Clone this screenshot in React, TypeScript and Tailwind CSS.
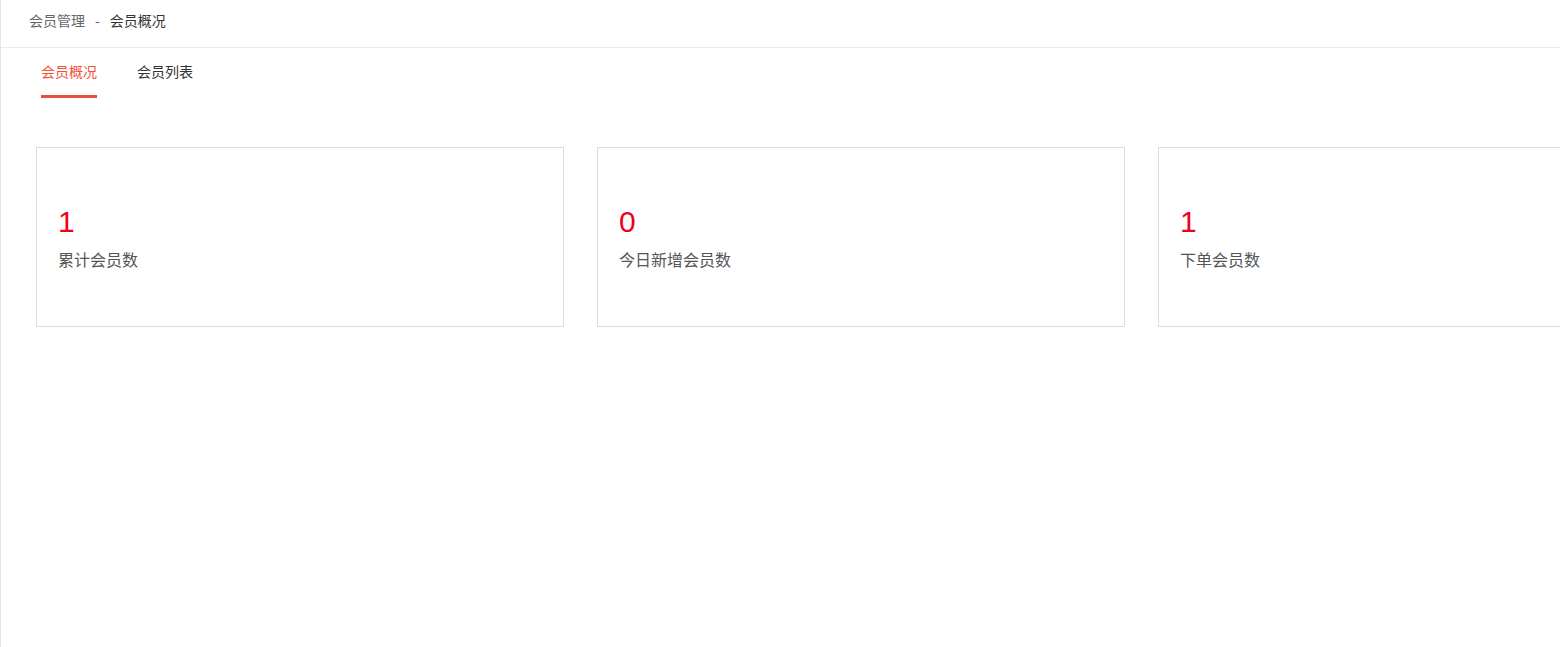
const stats = [
  { value: 1, label: '累计会员数' },
  { value: 0, label: '今日新增会员数' },
  { value: 1, label: '下单会员数' },
];

const tabs = ['会员概况', '会员列表'];

export default function App() {
  const active = 0;
  return (
    <div
      className="h-[647px] w-full overflow-hidden border-l border-[#e5e5e5] bg-white"
      style={{ fontFamily: '"Noto Sans CJK SC", "Noto Sans", sans-serif' }}
    >
      {/* Breadcrumb */}
      <div className="flex h-[48px] items-start border-b border-[#ebebeb] pl-[28px] pt-[10px] text-[14px] leading-[20px]">
        <span className="text-[#666]">会员管理</span>
        <span className="mx-[10px] text-[#666]">-</span>
        <span className="text-[#333]">会员概况</span>
      </div>

      {/* Tabs */}
      <div className="flex gap-[40px] pl-[40px]">
        {tabs.map((t, i) => (
          <div key={t} className="flex flex-col pt-[13px]">
            <span
              className={
                'text-[14px] leading-[20px] ' +
                (i === active ? 'text-[#f2503a]' : 'text-[#333]')
              }
            >
              {t}
            </span>
            <div
              className={
                'mt-[14px] h-[3px] ' + (i === active ? 'bg-[#ea4f3b]' : 'bg-transparent')
              }
            />
          </div>
        ))}
      </div>

      {/* Cards */}
      <div className="mt-[49px] flex gap-[33px] pl-[35px]">
        {stats.map((s) => (
          <div
            key={s.label}
            className="flex h-[180px] w-[528px] shrink-0 flex-col justify-center border border-[#dcdcdc] pl-[21px]"
          >
            <div
              className="text-[30px] leading-[36px] text-[#f0001b]"
              style={{ fontFamily: '"Liberation Sans", Arial, sans-serif' }}
            >
              {s.value}
            </div>
            <div className="mt-[7px] text-[16px] leading-[24px] text-[#555]">{s.label}</div>
          </div>
        ))}
      </div>
    </div>
  );
}
